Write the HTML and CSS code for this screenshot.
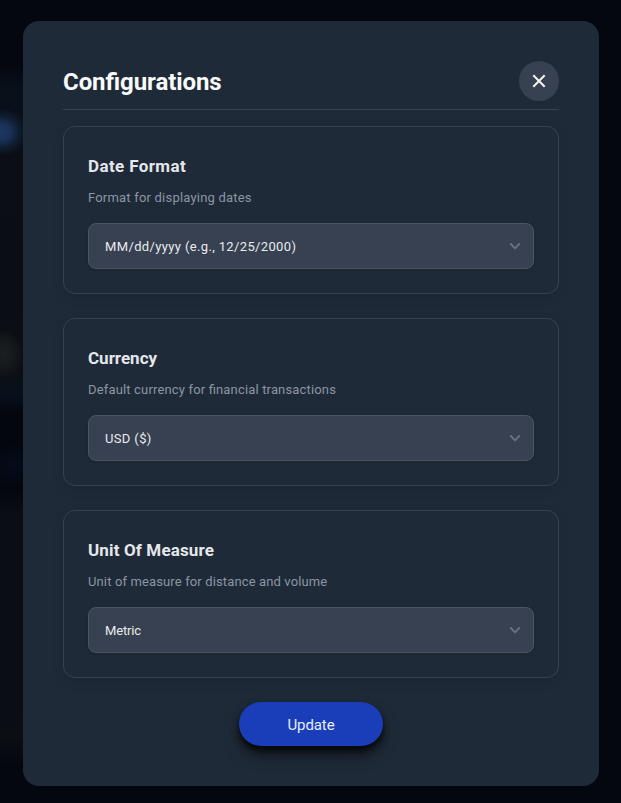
FILE: index.html
```html
<!DOCTYPE html>
<html lang="en">
<head>
<meta charset="utf-8">
<title>Configurations</title>
<link rel="stylesheet" href="styles.css">
</head>
<body>
<main class="dialog" role="dialog" aria-labelledby="title">
  <header class="header">
    <h1 class="title" id="title">Configurations</h1>
    <button class="close" aria-label="Close"><svg width="24" height="24" viewBox="0 0 24 24"><path d="M6.3 6.3 17.7 17.7M17.7 6.3 6.3 17.7"/></svg></button>
  </header>
  <div class="cards">
    <section class="card">
      <h2 class="name"><span class="t-date">Date Format</span></h2>
      <p class="hint"><span class="h-date">Format for displaying dates</span></p>
      <button class="select"><span class="v-date">MM/dd/yyyy (e.g., 12/25/2000)</span><svg class="chevron" width="12" height="8" viewBox="0 0 12 8"><path d="M1.8 2 6 6.3 10.2 2"/></svg></button>
    </section>
    <section class="card">
      <h2 class="name">Currency</h2>
      <p class="hint"><span class="h-currency">Default currency for financial transactions</span></p>
      <button class="select"><span class="v-currency">USD ($)</span><svg class="chevron" width="12" height="8" viewBox="0 0 12 8"><path d="M1.8 2 6 6.3 10.2 2"/></svg></button>
    </section>
    <section class="card">
      <h2 class="name"><span class="t-unit">Unit Of Measure</span></h2>
      <p class="hint"><span class="h-unit">Unit of measure for distance and volume</span></p>
      <button class="select"><span class="v-unit">Metric</span><svg class="chevron" width="12" height="8" viewBox="0 0 12 8"><path d="M1.8 2 6 6.3 10.2 2"/></svg></button>
    </section>
  </div>
  <button class="update">Update</button>
</main>
</body>
</html>
```
FILE: styles.css
```css
* { box-sizing: border-box; }
body {
  margin: 0;
  height: 803px;
  padding: 21px 22px 17px 23px;
  overflow: hidden;
  font-family: Roboto, "Noto Sans", sans-serif;
  font-feature-settings: "liga" 1;
  background:
    radial-gradient(ellipse 27px 24px at 1px 132px, #1c3763 0%, #193157 35%, rgba(20,40,72,.5) 68%, transparent 100%),
    radial-gradient(ellipse 21px 24px at 3px 354px, #1c1f22 0%, #171a1d 45%, transparent 100%),
    radial-gradient(ellipse 30px 22px at 14px 465px, #050b1b, transparent),
    linear-gradient(90deg, transparent 23px, #04070f 24px),
    linear-gradient(#04070f 0, #04070f 65px, #08101a 90px, #0b0f15 150px, #0a0d14 300px, #0c1014 370px, #07101a 397px, #03060d 412px, #03060d 490px, #0a0d14 515px, #0a0d14 710px, #0b0f14 735px, #04070f 765px, #04070f 803px);
}
button { font: inherit; border: 0; padding: 0; }
h1, h2, p { margin: 0; }
.dialog {
  width: 576px;
  height: 765px;
  padding: 40px;
  border-radius: 16px;
  background: #1f2a38;
}
.header {
  display: flex;
  justify-content: space-between;
  height: 49px;
  border-bottom: 1px solid #374151;
}
.title { font-size: 24px; line-height: 43px; font-weight: 700; letter-spacing: -.07px; color: #f8fafa; }
.close {
  display: grid;
  place-items: center;
  width: 40px;
  height: 40px;
  border-radius: 50%;
  background: #374151;
}
.close svg { fill: none; stroke: #f5f5f0; stroke-width: 2; }
.cards { display: grid; gap: 24px; margin-top: 16px; }
.card {
  height: 168px;
  padding: 24px;
  border: 1px solid #374151;
  border-radius: 12px;
  box-shadow: 0 4px 12px rgba(0, 0, 0, .1);
}
.name { height: 32px; font-size: 17px; line-height: 30px; font-weight: 700; color: #e5e7eb; }
.hint { height: 30px; font-size: 13px; line-height: 30px; color: #8b95a3; }
.select {
  display: flex;
  align-items: center;
  justify-content: space-between;
  width: 446px;
  height: 46px;
  margin-top: 10px;
  padding: 0 12px 0 16px;
  border: 1px solid #4b5563;
  border-radius: 8px;
  background: #374151;
  font-size: 13px;
  color: #e9ebee;
  box-shadow: 0 1px 3px rgba(0, 0, 0, .15);
}
.t-date { letter-spacing: .38px; }
.t-unit { letter-spacing: .14px; }
.h-date { letter-spacing: .2px; }
.h-currency { letter-spacing: .16px; }
.h-unit { letter-spacing: .13px; }
.v-date, .v-currency { letter-spacing: .36px; }
.v-unit { letter-spacing: -.15px; }
.chevron { fill: none; stroke: #6b7280; stroke-width: 1.8; stroke-linecap: round; stroke-linejoin: round; }
.update {
  display: block;
  width: 144px;
  height: 44px;
  margin: 24px auto 0;
  border-radius: 22px;
  background: #1a3db8;
  color: #e5edff;
  font-size: 15px;
  letter-spacing: -.1px;
  line-height: 46px;
  box-shadow: 0 10px 16px -2px rgba(0, 0, 0, .6), 0 4px 6px rgba(0, 0, 0, .7);
}
```
